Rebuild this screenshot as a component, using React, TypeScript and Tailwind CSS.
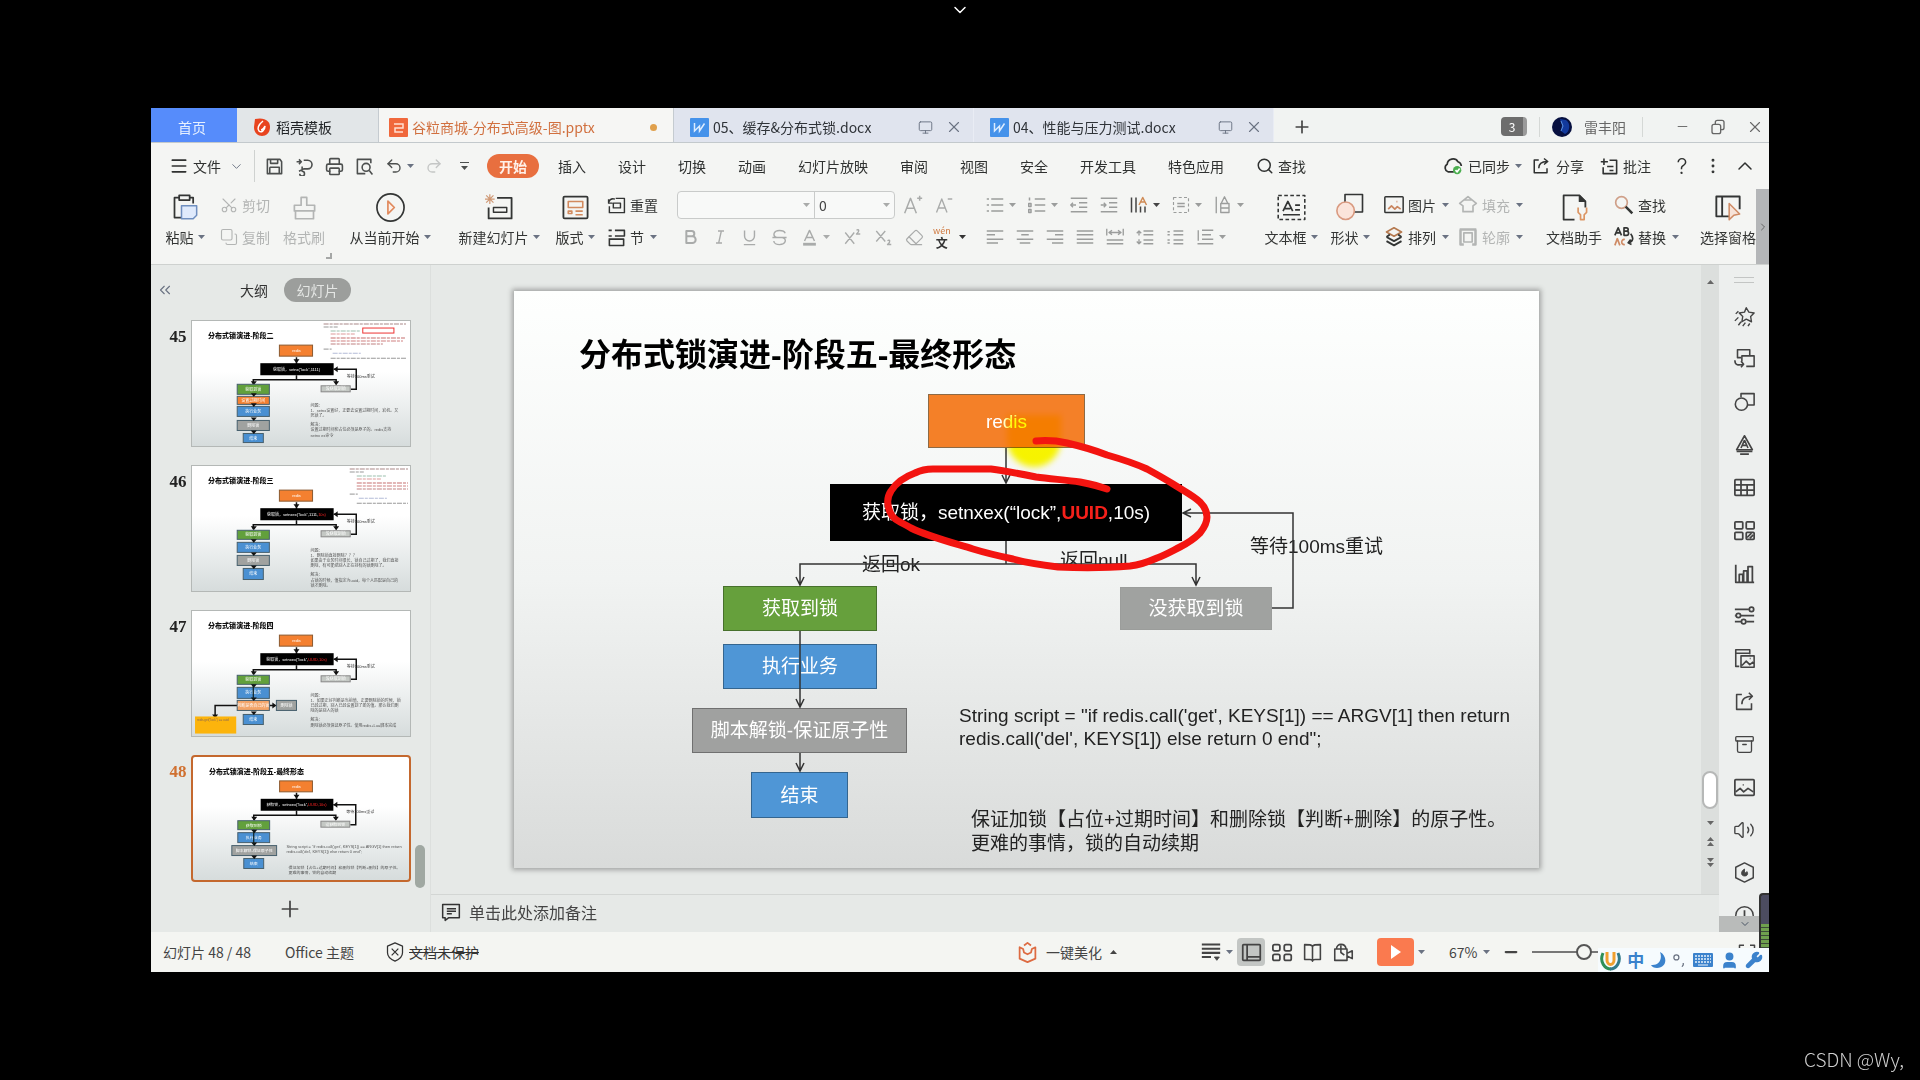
import type { ReactNode } from "react";
import clsx from "clsx";
import {
  Archive,
  ChevronDown,
  ChevronRight,
  ChevronUp,
  ChevronsLeft,
  Copy,
  EllipsisVertical,
  Eraser,
  Menu,
  Minus,
  Monitor,
  Plus,
  Printer,
  Redo2,
  Scissors,
  Search,
  Undo2,
  User,
  Volume2,
  Wrench,
  X,
} from "lucide-react";

interface IconProps {
  children: ReactNode;
  size?: number;
  className?: string;
}

const Icon = ({ children, size = 18, className }: IconProps) => (
  <svg
    width={size}
    height={size}
    viewBox="0 0 24 24"
    fill="none"
    stroke="currentColor"
    strokeWidth={2}
    strokeLinejoin="round"
    className={clsx("shrink-0", className)}
    aria-hidden="true"
  >
    {children}
  </svg>
);

const Caret = ({ className }: { className?: string }) => (
  <svg width="7" height="4" viewBox="0 0 7 4" className={clsx("shrink-0 fill-current", className)} aria-hidden="true">
    <path d="M0 0h7L3.500 4z" />
  </svg>
);

/* ---------- title bar ---------- */

const WriterLogo = () => (
  <svg width="19" height="19" viewBox="0 0 19 19" className="shrink-0" aria-hidden="true">
    <rect width="19" height="19" rx="1" fill="#4592ea" />
    <path d="M4.500 5v8l5-5v5l5-7.500" fill="none" stroke="#dcecff" strokeWidth="1.500" />
  </svg>
);

const DocTab = ({ title }: { title: string }) => (
  <div className="flex h-full w-[300px] shrink-0 items-center border-r border-[#e9ecf4] bg-[#e0e4ee] pt-1 pr-[10px] pl-4 text-[#2f3338]">
    <WriterLogo />
    <span className="ml-1 flex-1 whitespace-nowrap">{title}</span>
    <Monitor size={15} strokeWidth={1.5} className="mr-3 text-gray-500" />
    <button aria-label={`关闭 ${title}`}>
      <X size={18} strokeWidth={1.5} className="text-gray-500" />
    </button>
  </div>
);

const TitleBar = () => (
  <header className="flex h-[35px] items-center border-b border-[#c3c9cc] bg-[#f1f3f2]">
    <button className="h-full w-[86px] shrink-0 bg-[#568cfb] pt-1 pr-1 text-[#e6f0ff]">首页</button>
    <div className="flex h-full w-[142px] shrink-0 items-center gap-[6px] border-r border-[#c5cbd0] bg-[#e2e6e8] pt-1 pl-[17px] text-[#1f2225]">
      <svg width="16" height="18" viewBox="0 0 16 18" aria-hidden="true">
        <path d="M1 1c10-2 15 2 15 8s-4 9-8 9S0 15 0 9z" fill="#e8441f" />
        <path d="M9 3C4 7 3 11 5 13s6 0 6-5c-1 2-3 4-4 4" fill="none" stroke="#fff" strokeWidth="1.500" />
      </svg>
      稻壳模板
    </div>
    <div className="flex h-full w-[295px] shrink-0 items-center gap-1 border-r border-[#c5cbd0] bg-[#f6f6f4] pt-1 pr-4 pl-[10px] text-[#d1703f]">
      <svg width="19" height="19" viewBox="0 0 19 19" aria-hidden="true">
        <rect width="19" height="19" rx="1" fill="#f0683c" />
        <path d="M5 6h9v4H6v4h8" fill="none" stroke="#ffe0d2" strokeWidth="1.500" />
      </svg>
      <span className="flex-1 whitespace-nowrap">谷粒商城-分布式高级-图.pptx</span>
      <span className="size-[7px] rounded-full bg-[#e0a04c]" />
    </div>
    <DocTab title="05、缓存&分布式锁.docx" />
    <DocTab title="04、性能与压力测试.docx" />
    <button aria-label="新建" className="ml-[18px] pt-1">
      <Plus size={20} className="text-[#444]" />
    </button>

    <div className="ml-auto flex h-full shrink-0 items-center pt-[3px] text-[#666]">
      <span className="flex h-[19px] w-[26px] items-center justify-center rounded-sm border-r-4 border-[#9a9a9a] bg-[#6d6d6d] text-xs text-white">
        3
      </span>
      <span className="mx-3 h-5 w-px bg-[#d5d8d6]" />
      <svg width="20" height="20" viewBox="0 0 20 20" aria-hidden="true">
        <circle cx="10" cy="10" r="10" fill="#071040" />
        <path d="M8 2l2 6-1 6 4 3c5-2 6-11 1-14z" fill="#12399c" />
        <path d="M9 4l2 5-2 5" fill="none" stroke="#5c92e0" />
      </svg>
      <span className="ml-3">雷丰阳</span>
      <span className="mr-8 ml-4 h-5 w-px bg-[#d5d8d6]" />
      <button aria-label="最小化" className="mr-5">
        <Minus size={15} strokeWidth={1.5} />
      </button>
      <button aria-label="还原" className="mr-5">
        <Icon size={16}>
          <rect x="3" y="8" width="13" height="14" rx="3" />
          <path d="M8 8V5a3 3 0 0 1 3-3h7a3 3 0 0 1 3 3v8a3 3 0 0 1-3 3h-2" />
        </Icon>
      </button>
      <button aria-label="关闭" className="mr-[5px]">
        <X size={18} strokeWidth={1.5} />
      </button>
    </div>
  </header>
);

/* ---------- menu row ---------- */

const menuItems = ["插入", "设计", "切换", "动画", "幻灯片放映", "审阅", "视图", "安全", "开发工具", "特色应用"];

const MenuBar = () => (
  <nav className="flex h-[46px] items-center bg-[#f4f5f3] text-[#2f3130]">
    <button className="flex shrink-0 items-center gap-1 pl-[18px]">
      <Menu size={20} strokeWidth={2} />
      <span>文件</span>
      <ChevronDown size={15} strokeWidth={1.5} className="ml-1 text-gray-500" />
    </button>
    <span className="mx-[10px] h-8 w-px shrink-0 bg-[#cfd2d0]" />
    <div className="flex shrink-0 items-center gap-[11px] text-[#4c4f4e]">
      <button aria-label="保存">
        <Icon size={19}>
          <path d="M3 3h16l2 3v15H3zM7 3v5h9V3M6 13h12v8M6 13v8" />
        </Icon>
      </button>
      <button aria-label="输出">
        <Icon size={19}>
          <path d="M2 6h6M5 3l3 3-3 3M11 4h5a5 5 0 0 1 0 11h-5l-6 3M9 12v6a3 3 0 1 1-3 3" />
        </Icon>
      </button>
      <button aria-label="打印">
        <Printer size={19} strokeWidth={2} />
      </button>
      <button aria-label="打印预览">
        <Icon size={19}>
          <path d="M20 8V3H3v18h10" />
          <circle cx="14" cy="13" r="5" />
          <path d="m18 17 4 5" />
        </Icon>
      </button>
      <button aria-label="撤销" className="flex items-center gap-1">
        <Undo2 size={18} strokeWidth={1.8} />
        <Caret className="text-gray-500" />
      </button>
      <button aria-label="恢复" className="text-[#c4c6c5]">
        <Redo2 size={18} strokeWidth={1.8} />
      </button>
      <button aria-label="自定义快速访问工具栏" className="flex w-5 flex-col items-center gap-[3px]">
        <span className="h-px w-[9px] bg-current" />
        <Caret />
      </button>
    </div>
    <button className="mr-[19px] ml-[13px] h-6 w-[52px] shrink-0 rounded-full bg-[#e86f3f] font-bold text-[#fff0e8]">
      开始
    </button>
    <div className="flex shrink-0 items-center gap-8">
      {menuItems.map((item) => (
        <button key={item} className="shrink-0">
          {item}
        </button>
      ))}
      <button className="flex items-center gap-1">
        <Search size={18} strokeWidth={2} />
        查找
      </button>
    </div>
    <div className="ml-auto flex shrink-0 items-center">
      <button className="flex items-center gap-[5px]">
        <Icon size={20}>
          <path d="M13 19H6a5 5 0 0 1-1-9 7 7 0 0 1 13-3 6 6 0 0 1 4 5" />
          <circle cx="17" cy="17" r="5" fill="#4caf50" stroke="none" />
          <path d="m15 17 2 2 3-4" stroke="#fff" />
        </Icon>
        已同步
        <Caret className="text-gray-500" />
      </button>
      <button className="ml-[10px] flex items-center gap-[6px]">
        <Icon size={18}>
          <path d="M9 4H3v17h17v-6M9 15c0-6 4-9 11-9M16 2l5 4-5 4" />
        </Icon>
        分享
      </button>
      <button className="ml-4 flex items-center gap-1">
        <Icon size={19}>
          <path d="M12 4h9v17H4v-8M1 6h9M5 2v8M9 12h8M12 17h5" />
        </Icon>
        批注
      </button>
      <button aria-label="帮助" className="ml-[22px] w-[18px] font-[Inter] text-[22px] leading-6 font-light">
        ?
      </button>
      <button aria-label="更多" className="ml-3">
        <EllipsisVertical size={20} strokeWidth={1.5} />
      </button>
      <button aria-label="收起功能区" className="mr-3 ml-[10px]">
        <ChevronUp size={24} strokeWidth={1.5} />
      </button>
    </div>
  </nav>
);

/* ---------- ribbon ---------- */

interface RibbonButtonProps {
  label: string;
  icon: ReactNode;
  className?: string;
  caret?: boolean;
  disabled?: boolean;
}

const BigButton = ({ label, icon, className, caret, disabled }: RibbonButtonProps) => (
  <button
    className={clsx("flex shrink-0 flex-col items-center", disabled ? "text-[#b3b5b4]" : "text-[#333534]", className)}
  >
    <span className="flex h-9 items-center">{icon}</span>
    <span className="flex h-6 items-center gap-1 whitespace-nowrap">
      {label}
      {caret && <Caret className="text-gray-500" />}
    </span>
  </button>
);

const SmallButton = ({ label, icon, caret, disabled }: RibbonButtonProps) => (
  <button
    className={clsx("flex h-8 items-center gap-1 whitespace-nowrap", disabled ? "text-[#b3b5b4]" : "text-[#333534]")}
  >
    {icon}
    {label}
    {caret && <Caret className="ml-[2px] text-gray-500" />}
  </button>
);

const Tool = ({ label, children, caret, className }: { label: string; children: ReactNode; caret?: boolean; className?: string }) => (
  <button aria-label={label} className={clsx("flex h-8 shrink-0 items-center gap-[5px]", className)}>
    {children}
    {caret && <Caret />}
  </button>
);

const FontGroup = () => (
  <div className="w-[309px] shrink-0 text-[#a9abaa]">
    <div className="flex h-8 items-center">
      <div className="flex h-7 w-[218px] items-center rounded border border-[#c9cbca] bg-[#f8f9f8]">
        <label className="flex flex-1 items-center pr-1">
          <select aria-label="字体" className="h-6 w-full appearance-none border-none bg-transparent">
            <option></option>
          </select>
          <Caret />
        </label>
        <label className="flex h-full w-20 items-center border-l border-[#c9cbca] pr-1">
          <select aria-label="字号" className="h-6 w-full appearance-none bg-transparent pl-1 text-[#444]">
            <option>0</option>
          </select>
          <Caret />
        </label>
      </div>
      <Tool label="增大字号" className="ml-2">
        <Icon size={20}>
          <path d="m2 22 7-18 7 18M5 16h9M17 4h6M20 1v6" strokeWidth={1.8} />
        </Icon>
      </Tool>
      <Tool label="减小字号" className="ml-3">
        <Icon size={18}>
          <path d="m2 22 7-18 7 18M5 16h9M17 4h6" strokeWidth={1.8} />
        </Icon>
      </Tool>
    </div>
    <div className="flex h-8 items-center gap-[13px] pl-[6px]">
      <Tool label="加粗">
        <Icon size={16}>
          <path d="M5 3h8a4 4 0 0 1 0 8H5zM5 11h9a5 5 0 0 1 0 10H5z" strokeWidth={3} />
        </Icon>
      </Tool>
      <Tool label="倾斜">
        <Icon size={16}>
          <path d="M9 3h9M6 21h9M14 3l-4 18" />
        </Icon>
      </Tool>
      <Tool label="下划线">
        <Icon size={17}>
          <path d="M5 2v8a7 7 0 0 0 14 0V2M4 22h16" />
        </Icon>
      </Tool>
      <Tool label="删除线">
        <Icon size={17}>
          <path d="M20 6c-1-3-4-4-8-4-9 0-10 8-4 10h8c7 2 5 10-4 10-4 0-8-2-8-5M2 12h20" />
        </Icon>
      </Tool>
      <Tool label="字体颜色" caret>
        <Icon size={17}>
          <path d="m5 17 7-15 7 15M8 12h8" />
          <path d="M3 21.500h18" strokeWidth={4} />
        </Icon>
      </Tool>
      <Tool label="上标">
        <Icon size={18}>
          <path d="m3 6 12 15M15 6 3 21M18 3c3-2 5 1 0 5h5" strokeWidth={1.8} />
        </Icon>
      </Tool>
      <Tool label="下标">
        <Icon size={18}>
          <path d="m3 4 12 14M15 4 3 18M18 17c3-2 5 1 0 5h5" strokeWidth={1.8} />
        </Icon>
      </Tool>
      <Tool label="清除格式">
        <Eraser size={19} strokeWidth={1.5} />
      </Tool>
      <button aria-label="拼音指南" className="-ml-1 flex items-center gap-2 text-[#333]">
        <span className="flex flex-col items-center">
          <span className="text-[9px] leading-[11px] text-[#d07a40]">wén</span>
          <span className="text-xs leading-[14px] font-bold">文</span>
        </span>
        <Caret />
      </button>
    </div>
  </div>
);

const paragraphRows = [
  { name: "左对齐", d: "M1 4h22M1 9h11M1 15h22M1 20h15" },
  { name: "居中", d: "M1 4h22M7 9h10M1 15h22M5 20h14" },
  { name: "右对齐", d: "M1 4h22M12 9h11M1 15h22M8 20h15" },
  { name: "两端对齐", d: "M1 4h22M1 9h22M1 15h22M1 20h22" },
  { name: "分散对齐", d: "M1 1v9M23 1v9M4 6h16M8 3 4 6l4 3M16 3l4 3-4 3M1 16h22M1 21h22" },
  { name: "段前间距", d: "M10 4h13M10 9h13M10 16h13M10 21h13M4 10V4L1 7m3-3 3 3M4 15v6l-3-3m3 3 3-3" },
  { name: "段后间距", d: "M10 4h13M10 9h13M10 16h13M10 21h13M2 5h3M2 9h3M2 16h3M2 20h3" },
  { name: "行距", d: "M8 3h15M8 9h12M8 15h15M2 21h21M3 3v14" },
];

const ParagraphGroup = () => (
  <div className="w-[276px] shrink-0 text-[#9b9d9c]">
    <div className="flex h-8 items-center gap-3">
      <Tool label="项目符号" caret>
        <Icon>
          <path d="M7 4h16M7 12h16M7 20h16M1 4h3M1 12h3M1 20h3" />
        </Icon>
      </Tool>
      <Tool label="编号" caret>
        <Icon>
          <path d="M9 4h14M9 12h14M9 20h14M2 2v4M1 10h3v4H1zM1 18h3v4H1z" />
        </Icon>
      </Tool>
      <Tool label="减少缩进">
        <Icon>
          <path d="M1 3h22M12 9h11M12 15h11M1 21h22M8 12H1m3-3-3 3 3 3" strokeWidth={1.8} />
        </Icon>
      </Tool>
      <Tool label="增加缩进">
        <Icon>
          <path d="M1 3h22M12 9h11M12 15h11M1 21h22M1 12h7m-3-3 3 3-3 3" strokeWidth={1.8} />
        </Icon>
      </Tool>
      <Tool label="文字方向" caret className="text-[#444]">
        <Icon>
          <path d="M2 2v20M8 2v20M14 14v8M20 14v8" />
          <path d="m12 12 5-10 5 10M14 8h6" stroke="#cf8b55" />
        </Icon>
      </Tool>
      <Tool label="对齐文本" caret>
        <Icon>
          <rect x="2" y="2" width="20" height="20" strokeDasharray="4 3" strokeWidth={1.5} />
          <path d="M7 10h10M7 14h10" />
        </Icon>
      </Tool>
      <Tool label="转智能图形" caret>
        <Icon>
          <path d="M3 1v22M9 10h11v12H9zM9 16h11M10 9l4-8 4 8" strokeWidth={1.8} />
        </Icon>
      </Tool>
    </div>
    <div className="flex h-8 items-center gap-3">
      {paragraphRows.map(({ name, d }, index) => (
        <Tool key={name} label={name} caret={index === 7}>
          <Icon>
            <path d={d} strokeWidth={1.8} />
          </Icon>
        </Tool>
      ))}
    </div>
  </div>
);

const Ribbon = () => (
  <section className="relative flex h-[76px] border-b border-[#ced1cf] bg-[#f4f5f3]">
    <div className="flex min-w-0 flex-1 overflow-hidden pl-[7px]">
      <BigButton
        label="粘贴"
        caret
        className="w-[54px]"
        icon={
          <Icon size={28}>
            <path d="M9 21H3V4h16v5" strokeWidth={1.5} />
            <rect x="7" y="2" width="9" height="4" strokeWidth={1.5} fill="#f4f5f3" />
            <path d="M9 11h13v8l-3 3H9z" stroke="#6f8fc0" strokeWidth={1.3} fill="#dfeafc" />
          </Icon>
        }
      />
      <div className="w-[63px] shrink-0 pl-2">
        <SmallButton label="剪切" disabled icon={<Scissors size={18} strokeWidth={1.5} className="-rotate-90" />} />
        <SmallButton label="复制" disabled icon={<Copy size={18} strokeWidth={1.5} className="rotate-180" />} />
      </div>
      <BigButton
        label="格式刷"
        disabled
        className="w-[58px]"
        icon={
          <Icon size={27}>
            <path d="M9 10V3h5v7h7v5H3v-5zM4 15v7h16v-7" strokeWidth={1.5} />
          </Icon>
        }
      />
      <BigButton
        label="从当前开始"
        caret
        className="w-[114px]"
        icon={
          <Icon size={31}>
            <circle cx="12" cy="12" r="10.500" strokeWidth={1.3} />
            <path d="m10 7 5 5-5 5z" stroke="#e0895c" strokeWidth={1.3} fill="#fdf0e8" />
          </Icon>
        }
      />
      <BigButton
        label="新建幻灯片"
        caret
        className="w-[104px]"
        icon={
          <Icon size={29}>
            <path d="M10 4h12v17H3v-9" strokeWidth={1.5} />
            <rect x="7" y="12" width="11" height="4" strokeWidth={1.2} />
            <path d="M4 1v8M0 5h8M1 2l6 6M7 2 1 8" stroke="#cf9874" strokeWidth={1} />
          </Icon>
        }
      />
      <BigButton
        label="版式"
        caret
        className="w-12"
        icon={
          <Icon size={29}>
            <rect x="2" y="3" width="20" height="18" rx="1" strokeWidth={1.5} />
            <path d="M6 7h12v5H6zM6 15h3v2H6zM12 15h6M12 18h6" stroke="#d28a5e" strokeWidth={1.3} />
          </Icon>
        }
      />
      <div className="w-[78px] shrink-0 pl-2">
        <SmallButton
          label="重置"
          icon={
            <Icon size={19}>
              <path d="M11 3h11v18H3v-8M8 9h9v6H8zM2 4v5h5M2 8c2-5 5-5 8-4" strokeWidth={1.8} />
            </Icon>
          }
        />
        <SmallButton
          label="节"
          caret
          icon={
            <Icon size={19}>
              <path d="M2 3h4M10 3h12v7H10M2 10h4M3 14h18v8H3zM3 14v-1" strokeWidth={2} />
            </Icon>
          }
        />
      </div>
      <FontGroup />
      <ParagraphGroup />
      <BigButton
        label="文本框"
        caret
        className="w-[58px]"
        icon={
          <Icon size={29}>
            <rect x="1" y="2" width="22" height="20" strokeWidth={1.3} strokeDasharray="3 2" />
            <path d="m5 15 4-8 4 8M6 13h5M15 10h4M15 14h4M5 18h14" strokeWidth={1.4} />
          </Icon>
        }
      />
      <BigButton
        label="形状"
        caret
        className="w-[60px]"
        icon={
          <Icon size={30}>
            <path d="M8 2h14v14H8z" strokeWidth={1.3} />
            <circle cx="8.500" cy="15" r="7" stroke="#d99a80" strokeWidth={1.3} fill="#fbe4da" />
          </Icon>
        }
      />
      <div className="w-[74px] shrink-0 pl-1">
        <SmallButton
          label="图片"
          caret
          icon={
            <Icon size={20}>
              <rect x="1" y="2" width="22" height="19" rx="1" strokeWidth={1.8} />
              <path d="m5 17 4-4 4 4 3-3 4 3M15 8h1" stroke="#c98660" />
            </Icon>
          }
        />
        <SmallButton
          label="排列"
          caret
          icon={
            <Icon size={20}>
              <path d="m12 1 9 5-9 5-9-5z" stroke="#b5794f" />
              <path d="m3 12 9 5 9-5M3 17l9 5 9-5M3 12l4-3M21 12l-4-3" strokeWidth={2.2} />
            </Icon>
          }
        />
      </div>
      <div className="w-20 shrink-0 pl-1">
        <SmallButton
          label="填充"
          caret
          disabled
          icon={
            <Icon size={20}>
              <path d="m12 2 10 8-4 3v7H6v-7l-4-3zM7 6h9" />
            </Icon>
          }
        />
        <SmallButton
          label="轮廓"
          caret
          disabled
          icon={
            <Icon size={20}>
              <path d="M2 3h20M3 3v18h4M21 3v18h-4" strokeWidth={3} />
              <path d="M7 7h10v11H7z" />
            </Icon>
          }
        />
      </div>
      <BigButton
        label="文档助手"
        className="w-20"
        icon={
          <Icon size={29}>
            <path d="M12 22H3V2h13l5 5v5" strokeWidth={1.5} />
            <path d="M16 2v5h5z" fill="currentColor" strokeWidth={1} />
            <path d="M15 12v4l2 2v4h3v-4l2-2v-4" stroke="#dc9563" strokeWidth={1.4} />
          </Icon>
        }
      />
      <div className="w-[76px] shrink-0">
        <SmallButton
          label="查找"
          icon={
            <Icon size={20}>
              <circle cx="9" cy="9" r="7" stroke="#cf9f88" />
              <path d="m14 14 8 8" strokeWidth={3} />
            </Icon>
          }
        />
        <SmallButton
          label="替换"
          caret
          icon={
            <Icon size={20}>
              <path d="m1 10 4-9 4 9M3 7h4M12 1v9h3a2 2 0 0 0 0-5h-3 3a2 2 0 0 0 0-4zM20 8c4 5 3 10-3 11m3-4-3 4 4 2" />
              <path d="m1 22 3-8 3 8M13 15c-5-1-5 7 0 6" stroke="#cf8b65" />
            </Icon>
          }
        />
      </div>
      <BigButton
        label="选择窗格"
        className="w-[76px]"
        icon={
          <Icon size={28}>
            <path d="M14 20H2V3h20v11M7 3v17" strokeWidth={1.6} />
            <path d="m13 9 9 9-5 1-4 4z" stroke="#cf8b65" strokeWidth={1.3} fill="#f7e3d8" />
          </Icon>
        }
      />
    </div>
    <button aria-label="更多命令" className="flex w-[13px] shrink-0 items-center justify-center bg-[#b4b6b8] text-[#666]">
      <ChevronRight size={12} />
    </button>
    <span className="absolute bottom-[5px] left-[175px] size-[6px] border-r-2 border-b-2 border-[#a5a7a6]" />
  </section>
);

/* ---------- slide list ---------- */

interface ThumbBox {
  x: number;
  y: number;
  w: number;
  h: number;
  fill: string;
  label: string;
}

interface Thumb {
  no: number;
  title: string;
  command: string;
  arg: string;
  boxes: ThumbBox[];
  notes: { x: number; y: number; text: string }[];
  code?: boolean;
  branch?: boolean;
}

const GREEN = "#62a03c";
const BLUE = "#4a90d2";
const GREY = "#a0a2a0";
const ORANGE = "#f48030";

const thumbs: Thumb[] = [
  {
    no: 45,
    title: "分布式锁演进-阶段二",
    command: "setnx(“lock”,1111)",
    arg: "",
    code: true,
    boxes: [
      { x: 45, y: 63, w: 32, h: 10, fill: GREEN, label: "获取到锁" },
      { x: 45, y: 75, w: 32, h: 8, fill: ORANGE, label: "设置过期时间" },
      { x: 45, y: 85, w: 32, h: 10, fill: BLUE, label: "执行业务" },
      { x: 45, y: 99, w: 32, h: 10, fill: GREY, label: "删除锁" },
      { x: 51, y: 112, w: 20, h: 9, fill: BLUE, label: "结束" },
    ],
    notes: [
      { x: 118, y: 86, text: "问题：" },
      { x: 118, y: 91, text: "1、setnx设置好，正要去设置过期时间，宕机。又" },
      { x: 118, y: 96, text: "死锁了。" },
      { x: 118, y: 105, text: "解决：" },
      { x: 118, y: 110, text: "设置过期时间和占位必须是原子的。redis支持" },
      { x: 118, y: 115, text: "setnx ex命令" },
    ],
  },
  {
    no: 46,
    title: "分布式锁演进-阶段三",
    command: "setnxex(“lock”,1111,",
    arg: "10s)",
    code: true,
    boxes: [
      { x: 45, y: 64, w: 32, h: 9, fill: GREEN, label: "获取到锁" },
      { x: 45, y: 76, w: 32, h: 10, fill: BLUE, label: "执行业务" },
      { x: 45, y: 89, w: 32, h: 10, fill: GREY, label: "删除锁" },
      { x: 51, y: 102, w: 20, h: 11, fill: BLUE, label: "结束" },
    ],
    notes: [
      { x: 118, y: 86, text: "问题：" },
      { x: 118, y: 91, text: "1、删除锁直接删除？？？" },
      { x: 118, y: 96, text: "如果由于业务时间很长，锁自己过期了，我们直接" },
      { x: 118, y: 101, text: "删除，有可能把别人正在持有的锁删除了。" },
      { x: 118, y: 110, text: "解决：" },
      { x: 118, y: 115, text: "占锁的时候，值指定为uuid，每个人匹配是自己的" },
      { x: 118, y: 120, text: "锁才删除。" },
    ],
  },
  {
    no: 47,
    title: "分布式锁演进-阶段四",
    command: "setnxex(“lock”,",
    arg: "UUID,10s)",
    branch: true,
    boxes: [
      { x: 45, y: 64, w: 32, h: 9, fill: GREEN, label: "获取到锁" },
      { x: 45, y: 76, w: 32, h: 11, fill: BLUE, label: "执行业务" },
      { x: 45, y: 89, w: 32, h: 10, fill: "#f3a468", label: "判断是否自己的锁" },
      { x: 51, y: 103, w: 20, h: 10, fill: BLUE, label: "结束" },
      { x: 84, y: 89, w: 20, h: 10, fill: GREY, label: "删除锁" },
    ],
    notes: [
      { x: 118, y: 86, text: "问题：" },
      { x: 118, y: 91, text: "1、如果正好判断是当前值，正要删除锁的时候，锁" },
      { x: 118, y: 96, text: "已经过期，别人已经设置到了新的值。那么我们删" },
      { x: 118, y: 101, text: "除的是别人的锁" },
      { x: 118, y: 110, text: "解决：" },
      { x: 118, y: 115, text: "删除锁必须保证原子性。使用redis+Lua脚本完成" },
    ],
  },
  {
    no: 48,
    title: "分布式锁演进-阶段五-最终形态",
    command: "setnxex(“lock”,",
    arg: "UUID,10s)",
    boxes: [
      { x: 45, y: 64, w: 32, h: 9, fill: GREEN, label: "获取到锁" },
      { x: 45, y: 76, w: 32, h: 10, fill: BLUE, label: "执行业务" },
      { x: 39, y: 89, w: 45, h: 10, fill: GREY, label: "脚本解锁-保证原子性" },
      { x: 51, y: 102, w: 20, h: 10, fill: BLUE, label: "结束" },
    ],
    notes: [
      { x: 94, y: 91, text: "String script = \"if redis.call('get', KEYS[1]) == ARGV[1] then return" },
      { x: 94, y: 96, text: "redis.call('del', KEYS[1]) else return 0 end\";" },
      { x: 96, y: 113, text: "保证加锁【占位+过期时间】和删除锁【判断+删除】的原子性。" },
      { x: 96, y: 118, text: "更难的事情，锁的自动续期" },
    ],
  },
];

// faint source listing in the top right corner of a miniature
const codeLines = [
  { x: 131, y: 3, w: 82, c: "#a88" },
  { x: 131, y: 6, w: 14, c: "#999" },
  { x: 138, y: 10, w: 30, c: "#9cbfae" },
  { x: 138, y: 13, w: 24, c: "#d99" },
  { x: 138, y: 17, w: 74, c: "#c66f6f" },
  { x: 138, y: 20, w: 72, c: "#d08080" },
  { x: 138, y: 23, w: 52, c: "#c08080" },
  { x: 131, y: 28, w: 8, c: "#aaa" },
  { x: 140, y: 32, w: 28, c: "#b4bcd8" },
  { x: 138, y: 37, w: 76, c: "#999" },
];

const ThumbDrawing = ({ thumb }: { thumb: Thumb }) => {
  const shift = thumb.no === 46 ? 26 : 0;

  return (
    <svg viewBox="0 0 217 124" className="block w-full font-['Liberation_Sans','Noto_Sans_CJK_SC',sans-serif]">
      <text x="16" y="17" fontSize="7" fontWeight="900" fill="#111">
        {thumb.title}
      </text>
      {thumb.code &&
        codeLines.map((line) => (
          <path
            key={line.y}
            d={`M${line.x + shift} ${line.y}H${Math.min(line.x + line.w + shift, 215)}`}
            stroke={line.c}
            strokeDasharray="5 1 3 1"
          />
        ))}
      {thumb.no === 45 && <rect x="170" y="7" width="31" height="5" fill="#fff" stroke="#e33" />}
      <g fill="none" stroke="#111" strokeWidth="1.500">
        <path d="M104 36v8M104 54v4M61 63v-4.500h82.500V63M158 68h5.500V48H141" />
        {thumb.branch && <path d="M45 94H23v10M77 94h6" />}
      </g>
      <path d="M101 38h6l-3 4zM58.500 60h6l-3 4zM140.500 60h6l-3 4zM145 45v6l-4-3z" fill="#111" />
      <rect x="87" y="24" width="33" height="11" fill={ORANGE} stroke="#8b5a30" />
      <rect x="68" y="42" width="73" height="12" fill="#000" />
      <rect x="128.500" y="64.500" width="29" height="6" fill="#c4c8c4" stroke="#888" />
      <g fontSize="4" textAnchor="middle" fill="#fff">
        <text x="104" y="31">
          redis
        </text>
        <text x="104" y="49.500">
          获取锁，{thumb.command}
          <tspan fill="#f22">{thumb.arg}</tspan>
        </text>
        <text x="143" y="69">
          没获取到锁
        </text>
        <text x="168" y="56.500" fill="#333">
          等待100ms重试
        </text>
      </g>
      {thumb.boxes.map((box) => (
        <g key={box.label}>
          <rect x={box.x} y={box.y} width={box.w} height={box.h} fill={box.fill} stroke="#47606e" />
          <text x={box.x + box.w / 2} y={box.y + box.h / 2 + 1.5} fontSize="4" textAnchor="middle" fill="#fff">
            {box.label}
          </text>
        </g>
      ))}
      {thumb.boxes
        .slice(1)
        .map((box) => box.x < 80 && <path key={box.label} d={`M58.500 ${box.y - 3}h6l-3 3.500z`} fill="#111" />)}
      {thumb.no > 46 && <path d="M61 73v15" stroke="#122" strokeWidth="1.200" />}
      {thumb.branch && (
        <g>
          <path d="M20 103h6l-3 4zM80 91v6l4-3z" fill="#111" />
          <rect x="3" y="105" width="41" height="17" fill="#fcb40c" />
          <text x="5" y="110" fontSize="3" fill="#865">
            redis.get(“lock”) == uuid
          </text>
        </g>
      )}
      <g fontSize="4" fill="#555">
        {thumb.notes.map((note) => (
          <text key={note.y} x={note.x} y={note.y}>
            {note.text}
          </text>
        ))}
      </g>
    </svg>
  );
};

const SlideList = () => (
  <aside className="relative flex w-[280px] shrink-0 flex-col border-r border-[#dcdfdd] bg-[#e6e9e7]">
    <div className="flex h-[50px] shrink-0 items-center pl-[5px]">
      <button aria-label="收起" className="text-gray-500">
        <ChevronsLeft size={18} strokeWidth={1.5} />
      </button>
      <button className="ml-[66px] text-[#333]">大纲</button>
      <button className="ml-4 h-6 w-[67px] rounded-full bg-[#9c9e9c] text-[#e4e6e4]">幻灯片</button>
    </div>
    <ol className="flex flex-col gap-[19px] pt-[5px] pl-[18px]">
      {thumbs.map((thumb) => {
        const active = thumb.no === 48;
        return (
          <li key={thumb.no} className="flex h-[126px] items-start gap-1">
            <span
              className={clsx(
                "w-[18px] pt-[5px] text-center font-['Liberation_Serif',serif] text-[17px] leading-6 font-bold",
                active ? "text-[#d07030]" : "text-[#222]"
              )}
            >
              {thumb.no}
            </span>
            <button
              aria-label={thumb.title}
              className={clsx(
                "w-[220px] overflow-hidden bg-linear-to-b from-white from-40% to-[#d6dcdc]",
                active ? "rounded border-2 border-[#c4682e]" : "border border-[#b4b8b6]"
              )}
            >
              <ThumbDrawing thumb={thumb} />
            </button>
          </li>
        );
      })}
    </ol>
    <button aria-label="新建幻灯片" className="mt-[15px] flex justify-center pr-[2px] text-[#444]">
      <Plus size={26} strokeWidth={1.6} />
    </button>
    <span className="absolute right-[5px] bottom-11 h-[43px] w-[10px] rounded-full bg-[#a0a8a2]" />
  </aside>
);

/* ---------- slide ---------- */

const shapes = [
  { text: "redis", className: "left-[414px] top-[103px] h-[54px] w-[157px] border-[#8d6a45] bg-[#f48028]" },
  { text: "获取到锁", className: "left-[209px] top-[295px] h-[45px] w-[154px] border-[#47702c] bg-[#66a03c]" },
  { text: "执行业务", className: "left-[209px] top-[353px] h-[45px] w-[154px] border-[#34658f] bg-[#4f96d6]" },
  { text: "脚本解锁-保证原子性", className: "left-[178px] top-[417px] h-[45px] w-[215px] border-[#707070] bg-[#a0a1a0]" },
  { text: "结束", className: "left-[237px] top-[481px] h-[46px] w-[97px] border-[#34658f] bg-[#4f96d6]" },
  { text: "没获取到锁", className: "left-[606px] top-[296px] h-[43px] w-[152px] border-[#9b9d9b] bg-[#a0a2a0]" },
];

const Slide = () => (
  <article className="relative h-[577px] w-[1025px] shrink-0 bg-linear-to-b from-[#fefffe] via-[#f1f3f2] to-[#d9dbda] font-['Liberation_Sans','Noto_Sans_CJK_SC',sans-serif] text-[19px] leading-6 text-[#222] shadow-[0_0_5px_2px_rgba(0,0,0,0.3)]">
    <h1 className="absolute top-[41px] left-[65px] text-[32px] leading-[46px] font-bold whitespace-nowrap text-black">
      分布式锁演进-阶段五-最终形态
    </h1>
    {shapes.map(({ text, className }) => (
      <div key={text} className={clsx("absolute flex items-center justify-center border pt-px whitespace-nowrap text-white", className)}>
        {text}
      </div>
    ))}
    <div className="absolute top-[193px] left-[316px] flex h-[57px] w-[352px] items-center justify-center bg-black pt-px whitespace-nowrap text-white">
      获取锁，setnxex(“lock”,<b className="text-[#f5201a]">UUID</b>,10s)
    </div>
    <p className="absolute top-[262px] left-[348px]">返回ok</p>
    <p className="absolute top-[258px] left-[546px]">返回null</p>
    <p className="absolute top-[244px] left-[736px] whitespace-nowrap">等待100ms重试</p>
    <p className="absolute top-[413px] left-[445px] leading-[23px] whitespace-nowrap">
      String script = "if redis.call('get', KEYS[1]) == ARGV[1] then return
      <br />
      redis.call('del', KEYS[1]) else return 0 end";
    </p>
    <p className="absolute top-[517px] left-[457px] whitespace-nowrap">
      保证加锁【占位+过期时间】和删除锁【判断+删除】的原子性。
      <br />
      更难的事情，锁的自动续期
    </p>

    {/* connectors */}
    <svg className="absolute inset-0 size-full" viewBox="0 0 1025 577" fill="none" stroke="#333" strokeWidth="1.500" aria-hidden="true">
      <path d="M492 157v35m-4-8 4 8 4-8" />
      <path d="M492 250v23M286 294v-21h396v21m-4-8 4 8 4-8M282 286l4 8 4-8" />
      <path d="M286 340v76m-4-8 4 8 4-8" />
      <path d="M286 462v18m-4-8 4 8 4-8" />
      <path d="M758 317h21v-95H669m8-4-8 4 8 4" />
    </svg>

    {/* highlighter */}
    <span className="absolute top-[124px] left-[493px] h-[52px] w-[54px] rounded-b-full bg-[#fffa00] mix-blend-multiply blur-[3px]" />
    {/* pen stroke */}
    <svg className="absolute inset-0 size-full" viewBox="514 291 1025 577" fill="none" aria-hidden="true">
      <path
        d="M1036 441C1048 440 1058 441 1067 443C1080 446 1094 450 1107 455C1121 459 1134 463 1147 469C1158 475 1165 479 1173 484C1184 491 1194 496 1200 502C1205 507 1207 511 1207 517C1207 523 1204 528 1200 533C1195 538 1188 543 1180 547C1172 551 1165 555 1157 558C1148 562 1139 565 1130 566C1106 568 1082 568 1058 567C1042 565 1027 563 1013 559C999 556 986 553 973 549C950 542 927 536 911 528C901 522 893 520 890 512C887 505 887 497 891 491C896 483 904 477 915 473C921 470 927 469 933 469H991C1006 471 1021 474 1036 477C1051 479 1066 480 1080 482C1090 484 1099 486 1107 489"
        stroke="#f31410"
        strokeWidth="7"
        strokeLinecap="round"
        strokeLinejoin="round"
      />
    </svg>
  </article>
);

const Editor = () => (
  <main className="flex min-w-0 flex-1 flex-col bg-[#e6e9e7]">
    <div className="flex flex-1 border-b border-[#d3d6d4]">
      <div className="min-w-0 flex-1 overflow-hidden pt-[26px] pb-6 pl-[83px]">
        <Slide />
      </div>
      <div className="flex w-[18px] shrink-0 flex-col items-center bg-[#dcdfdd] pt-[15px] text-[#666]">
        <Caret className="rotate-180" />
        <span className="mt-auto h-[38px] w-4 rounded-full border-2 border-[#b6b8b7] bg-white" />
        <Caret className="mt-3" />
        <span className="mt-3 flex flex-col gap-px">
          <Caret className="rotate-180" />
          <Caret className="rotate-180" />
        </span>
        <span className="mt-3 mb-[27px] flex flex-col gap-px">
          <Caret />
          <Caret />
        </span>
      </div>
    </div>
    <label className="flex h-[37px] shrink-0 items-center gap-2 pb-1 pl-[10px] text-[#333]">
      <Icon size={20}>
        <path d="M2 3h20v16H9l-4 3v-3H2zM7 8h11M7 11h11M7 14h6" strokeWidth={1.8} />
      </Icon>
      <input
        type="text"
        aria-label="备注"
        placeholder="单击此处添加备注"
        className="w-full bg-transparent text-base outline-none placeholder:text-[#444]"
      />
    </label>
  </main>
);

/* ---------- right task pane ---------- */

const paneTools: { name: string; icon: ReactNode }[] = [
  {
    name: "动画",
    icon: (
      <Icon size={21}>
        <path d="m14 2 3 5 6 1-4 4 1 6-6-3-5 3 1-6-4-4 6-1zM5 6 2 9M5 13l-4 4M8 18l-3 4M13 19l-3 4M18 20l-2 3" strokeWidth={1.6} />
      </Icon>
    ),
  },
  {
    name: "切换",
    icon: (
      <Icon size={21}>
        <path d="M8 11H4V2h14v6M9 15V9h14v12h-9M1 14c0 6 4 6 10 4.500m-3-3.500 3 3.500-3 3.500" strokeWidth={1.8} />
      </Icon>
    ),
  },
  {
    name: "形状",
    icon: (
      <Icon size={21}>
        <path d="M8 7V3h15v13h-7" strokeWidth={1.8} />
        <circle cx="8.500" cy="15" r="7" strokeWidth={1.8} />
      </Icon>
    ),
  },
  {
    name: "艺术字",
    icon: (
      <Icon size={21}>
        <path d="M12 2 3 18h18zM12 7l-4 9M12 7l4 9M9 13h6M3 20h18M7 23h10" strokeWidth={1.8} />
      </Icon>
    ),
  },
  {
    name: "表格",
    icon: (
      <Icon size={21}>
        <rect x="1" y="3" width="22" height="18" rx="1" />
        <path d="M1 9h22M1 15h22M8 3v18M15 9v12" />
      </Icon>
    ),
  },
  {
    name: "素材",
    icon: (
      <Icon size={21}>
        <rect x="1" y="2" width="9" height="8" rx="1" />
        <rect x="14" y="2" width="9" height="8" rx="1" />
        <rect x="1" y="14" width="9" height="8" rx="1" />
        <rect x="14" y="14" width="9" height="8" rx="1" />
        <path d="m15 20 5-5M18 21l4-4" />
      </Icon>
    ),
  },
  {
    name: "图表",
    icon: (
      <Icon size={21}>
        <path d="M2 2v20h21M6 22v-9h4v9M11 22V9h4v13M16 22V4h5v18" />
      </Icon>
    ),
  },
  {
    name: "属性",
    icon: (
      <Icon size={21}>
        <path d="M1 5h16M8 12h15M1 19h7M14 19h9M1 12h1" />
        <circle cx="20" cy="5" r="2.500" />
        <circle cx="5" cy="12" r="2.500" />
        <circle cx="11" cy="19" r="2.500" />
      </Icon>
    ),
  },
  {
    name: "图库",
    icon: (
      <Icon size={21}>
        <path d="M6 21H2V2h16v5M2 6h16M8 9h15v13H8zM9 20l5-5 4 4 4-3M18 12h1" strokeWidth={1.8} />
      </Icon>
    ),
  },
  {
    name: "分享",
    icon: (
      <Icon size={21}>
        <path d="M9 4H3v17h17v-7M9 15c0-6 4-9 12-9M17 2l4 4-4 4" strokeWidth={1.8} />
      </Icon>
    ),
  },
  { name: "归档", icon: <Archive size={21} strokeWidth={1.5} /> },
  {
    name: "图片",
    icon: (
      <Icon size={21}>
        <rect x="1" y="3" width="22" height="18" rx="1" />
        <path d="m2 17 5-4 4 4 5-4 6 4M10 9h1" />
      </Icon>
    ),
  },
  { name: "音频", icon: <Volume2 size={22} strokeWidth={1.5} /> },
  {
    name: "推荐",
    icon: (
      <Icon size={21}>
        <path d="m12 1 10 5v12l-10 5-10-5V6z" strokeWidth={1.7} />
        <path d="M12 8c-5 3-4 8 0 8s4-3 3-5l-3 2z" fill="currentColor" strokeWidth={1} />
      </Icon>
    ),
  },
  {
    name: "历史",
    icon: (
      <Icon size={21}>
        <circle cx="12" cy="12" r="10" strokeWidth={1.7} />
        <path d="M12 6v7" />
      </Icon>
    ),
  },
];

const TaskPane = () => (
  <aside className="relative w-[50px] shrink-0 overflow-hidden bg-[#edefee] text-[#444]">
    <div className="absolute inset-x-0 top-0">
      <div className="mx-auto my-3 h-[6px] w-5 border-y border-[#c3c5c4]" />
      <div className="flex h-[642px] flex-col items-center justify-between">
        {paneTools.map(({ name, icon }) => (
          <button key={name} aria-label={name} className="flex size-[42px] items-center justify-center">
            {icon}
          </button>
        ))}
      </div>
    </div>
    <button
      aria-label="向下滚动"
      className="absolute bottom-0 left-0 flex h-4 w-10 items-center justify-center bg-[#b9bbba] pl-3 text-gray-600"
    >
      <ChevronDown size={12} />
    </button>
  </aside>
);

/* ---------- status bar ---------- */

const StatusBar = () => (
  <footer className="relative flex h-10 shrink-0 items-center bg-[#f4f5f2] text-[#444]">
    <span className="ml-3 w-[122px] whitespace-nowrap">幻灯片 48 / 48</span>
    <span className="w-[100px] whitespace-nowrap">Office 主题</span>
    <button className="flex items-center gap-1 text-[#333]">
      <Icon size={20}>
        <path d="m12 1 9 4v8c0 5-4 8-9 10-5-2-9-5-9-10V5zM8 8l8 8M16 8l-8 8" strokeWidth={1.5} />
      </Icon>
      <span className="line-through">文档未保护</span>
    </button>

    <div className="ml-auto flex w-[752px] shrink-0 items-center">
      <button className="flex items-center gap-2">
        <Icon size={21} className="text-[#dd6b42]">
          <path d="M3 6v13l9 4 9-4V6l-4 2-1 4-4 2-4-2-1-4zM8 4l4-3 4 3" />
        </Icon>
        <span>一键美化</span>
        <Caret className="rotate-180" />
      </button>
      <button aria-label="备注" className="ml-[84px] flex items-center gap-[5px]">
        <Icon size={20}>
          <path d="M1 3h22M1 8h22M1 13h22M1 18h11" strokeWidth={2.5} />
          <path d="m16 18 6 0-3 4z" fill="currentColor" strokeWidth={1} />
        </Icon>
        <Caret className="text-gray-500" />
      </button>
      <button aria-label="普通视图" className="ml-1 flex h-7 w-7 items-center justify-center rounded-sm bg-[#c3c6c4]">
        <Icon size={21}>
          <rect x="2" y="3" width="20" height="18" rx="1" />
          <path d="M7 3v18M7 17h15" />
        </Icon>
      </button>
      <button aria-label="幻灯片浏览" className="ml-[7px]">
        <Icon size={21}>
          <rect x="1" y="3" width="8" height="7" rx="2" />
          <rect x="14" y="3" width="8" height="7" rx="2" />
          <rect x="1" y="14" width="8" height="7" rx="2" />
          <rect x="14" y="14" width="8" height="7" rx="2" />
        </Icon>
      </button>
      <button aria-label="阅读视图" className="ml-[9px]">
        <Icon size={21}>
          <path d="M12 5v17M12 5c-1-2-3-2-9-2v17h6c2 0 3 1 3 2 0-1 1-2 3-2h6V3c-6 0-8 0-9 2" strokeWidth={1.8} />
        </Icon>
      </button>
      <button aria-label="演讲者视图" className="ml-[10px]">
        <Icon size={21}>
          <path d="M2 8h14v13H2zM16 13l6-3v9l-6-3M4 8c0-7 10-7 11 0M9 4v8l4 3" strokeWidth={1.8} />
        </Icon>
      </button>
      <button aria-label="放映" className="ml-[23px] flex h-7 w-[37px] items-center justify-center rounded-sm bg-[#fa7a4f]">
        <svg width="10" height="14" viewBox="0 0 10 14" aria-hidden="true">
          <path d="M0 0v14l10-7z" fill="#fff" />
        </svg>
      </button>
      <Caret className="ml-1 text-gray-500" />
      <button className="ml-6 flex items-center gap-[6px]">
        67%
        <Caret className="text-gray-500" />
      </button>
      <button aria-label="缩小" className="ml-3">
        <Minus size={18} strokeWidth={3} />
      </button>
      <input
        type="range"
        aria-label="显示比例"
        min={10}
        max={210}
        defaultValue={60}
        className="ml-3 h-4 w-[190px] appearance-none bg-transparent [&::-webkit-slider-runnable-track]:h-[2px] [&::-webkit-slider-runnable-track]:bg-[#777] [&::-webkit-slider-thumb]:-mt-[7px] [&::-webkit-slider-thumb]:size-4 [&::-webkit-slider-thumb]:appearance-none [&::-webkit-slider-thumb]:rounded-full [&::-webkit-slider-thumb]:border-2 [&::-webkit-slider-thumb]:border-[#555] [&::-webkit-slider-thumb]:bg-[#f4f5f2]"
      />
      <Icon size={18} className="ml-4">
        <path d="M2 8V3h6M16 3h6v5M22 16v5h-6M8 21H2v-5" />
      </Icon>
    </div>

    {/* input method bar floats over the corner */}
    <div className="absolute right-0 bottom-0 flex h-6 w-[171px] items-center justify-between bg-[#f6fbfe] pr-[6px] pl-[2px] text-[#3b82cc]">
      <svg width="21" height="21" viewBox="0 0 21 21" fill="none" strokeWidth="3" aria-hidden="true">
        <path d="M3 3c-4 9 2 16 8 16" stroke="#2f8f57" />
        <path d="M18 3c4 9-2 16-8 16" stroke="#337a8a" />
        <path d="M7 2v8c0 6 7 6 7 0V2" stroke="#f0a030" />
      </svg>
      <span className="text-[17px] leading-6 font-bold">中</span>
      <svg width="15" height="16" viewBox="0 0 15 16" className="fill-current" aria-hidden="true">
        <path d="M9 0c8 4 7 16-3 16-3 0-5-1-6-3 7 1 12-5 9-13z" />
      </svg>
      <Icon size={15} className="text-gray-500">
        <circle cx="7" cy="7" r="4" />
        <path d="M18 16v3l-2 3" />
      </Icon>
      <svg width="20" height="14" viewBox="0 0 20 14" aria-hidden="true">
        <rect width="20" height="14" rx="1" fill="#3b82cc" />
        <path d="M2 3h16M2 6h16M2 9h16" stroke="#e8f2fc" strokeWidth="1.500" strokeDasharray="2 1" />
        <path d="M5 12h10" stroke="#e8f2fc" />
      </svg>
      <User size={19} className="fill-current" />
      <Wrench size={18} className="fill-current" />
    </div>
    <div className="absolute right-0 bottom-6 flex h-[55px] w-[10px] flex-col justify-end rounded-tl-sm border-t-2 border-l-2 border-[#333] bg-[#4c4c60]">
      <span className="h-6 bg-[repeating-linear-gradient(#6fa04e_0_3px,#3c4a38_3px_4px)]" />
    </div>
  </footer>
);

export default function App() {
  return (
    <div className="flex min-h-screen flex-col bg-black font-['Noto_Sans_CJK_SC',sans-serif] text-sm">
      <div className="flex h-[108px] justify-center text-white">
        <ChevronDown size={20} strokeWidth={1.8} />
      </div>
      <div className="mx-[151px] flex flex-1 flex-col overflow-hidden">
        <TitleBar />
        <MenuBar />
        <Ribbon />
        <div className="flex flex-1">
          <SlideList />
          <Editor />
          <TaskPane />
        </div>
        <StatusBar />
      </div>
      <div className="flex h-[108px] items-end justify-end pr-4 pb-2 text-[19px] leading-[26px] font-light text-[#cfcfcf]">
        CSDN @Wy,
      </div>
    </div>
  );
}
